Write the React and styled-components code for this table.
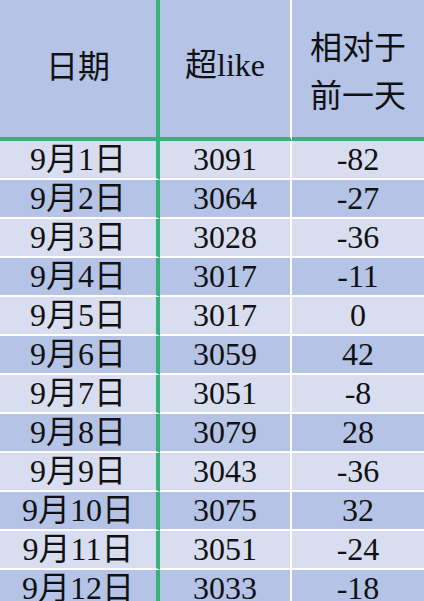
import React from 'react'
import styled, { createGlobalStyle } from 'styled-components'

const rows = [
    ['9月1日', '3091', '-82'],
    ['9月2日', '3064', '-27'],
    ['9月3日', '3028', '-36'],
    ['9月4日', '3017', '-11'],
    ['9月5日', '3017', '0'],
    ['9月6日', '3059', '42'],
    ['9月7日', '3051', '-8'],
    ['9月8日', '3079', '28'],
    ['9月9日', '3043', '-36'],
    ['9月10日', '3075', '32'],
    ['9月11日', '3051', '-24'],
    ['9月12日', '3033', '-18'],
]

const GlobalStyle = createGlobalStyle`
    * { box-sizing: border-box; }
    html, body {
        margin: 0;
        padding: 0;
        background: #d8def0;
        overflow: hidden;
    }
`

const Table = styled.div`
    display: grid;
    grid-template-columns: 160px 132px 132px;
    width: 424px;
    height: 601px;
    overflow: hidden;
    font-family: "Liberation Serif", "Noto Sans CJK SC", serif;
    font-size: 32px;
    color: #111111;
`

const HeadCell = styled.div`
    height: 141px;
    display: flex;
    align-items: center;
    justify-content: center;
    text-align: center;
    background: #b4c3e6;
    border-bottom: 4px solid #36b27c;
    border-right: ${p => p.$first ? '4px solid #36b27c' : p.$last ? 'none' : '2px solid #ffffff'};
    line-height: 48px;
    padding-bottom: ${p => p.$single ? '10px' : '0'};
`

const CjkText = styled.span`
    font-family: "Noto Sans CJK SC", sans-serif;
`

const Cell = styled.div`
    height: 39px;
    display: flex;
    align-items: center;
    justify-content: center;
    background: ${p => p.$dark ? '#b4c3e6' : '#d8def0'};
    border-bottom: 2px solid #ffffff;
    border-right: ${p => p.$first ? '4px solid #36b27c' : p.$last ? 'none' : '2px solid #ffffff'};
    line-height: 1;
    padding-bottom: 2px;
`

export default function App() {
    return (
        <>
            <GlobalStyle />
            <Table>
                <HeadCell $first $single><CjkText>日期</CjkText></HeadCell>
                <HeadCell $single><span><CjkText>超</CjkText>like</span></HeadCell>
                <HeadCell $last><CjkText>相对于<br />前一天</CjkText></HeadCell>
                {rows.map((r, i) => (
                    <React.Fragment key={r[0]}>
                        <Cell $first $dark={i % 2 === 1}>{r[0]}</Cell>
                        <Cell $dark={i % 2 === 1}>{r[1]}</Cell>
                        <Cell $last $dark={i % 2 === 1}>{r[2]}</Cell>
                    </React.Fragment>
                ))}
            </Table>
        </>
    )
}
